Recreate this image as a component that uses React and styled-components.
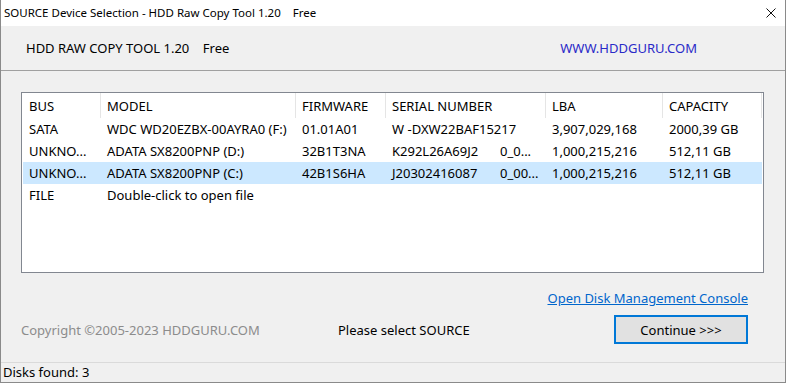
import React from "react";
import styled, { createGlobalStyle } from "styled-components";

const Global = createGlobalStyle`
  html, body { margin: 0; padding: 0; background: #f0f0f0; }
  body { font-family: "Noto Sans", "Open Sans", sans-serif; font-size: 13px; color: #000; }
  * { box-sizing: border-box; }
`;

const Window = styled.div`
  width: 786px;
  height: 383px;
  display: flex;
  flex-direction: column;
  background: #f0f0f0;
  border: 1px solid #8a8a8a;
  border-top: none;
  overflow: hidden;
`;

const TitleBar = styled.div`
  height: 26px;
  flex: none;
  background: #fff;
  display: flex;
  align-items: center;
  justify-content: space-between;
  padding: 0 9px 1px 3px;
`;

const TitleText = styled.span`
  white-space: pre;
  font-size: 11.5px;
`;

const CloseIcon = styled.svg`
  width: 10px;
  height: 10px;
  display: block;
`;

const Header = styled.div`
  height: 45px;
  flex: none;
  display: flex;
  align-items: center;
  justify-content: space-between;
  padding: 0 88px 0 25px;
  border-bottom: 1px solid #a0a0a0;
`;

const HeaderTitle = styled.span`
  white-space: pre;
`;

const SiteLink = styled.span`
  color: #2a2ac8;
`;

const Body = styled.div`
  flex: 1;
  display: flex;
  flex-direction: column;
  padding: 21px 21px 0 20px;
`;

const ListBox = styled.div`
  height: 181px;
  background: #fff;
  border: 1px solid #828790;
  padding: 0 1px 0 0;
  display: flex;
  flex-direction: column;
`;

const Row = styled.div`
  display: grid;
  grid-template-columns: 78px 195px 90px 160px 117px 99px;
  height: ${(p) => (p.$head ? "25px" : "22px")};
  align-items: stretch;
  margin-left: 1px;
  background: ${(p) => (p.$selected ? "#cce8ff" : "transparent")};
`;

const Cell = styled.div`
  display: flex;
  align-items: center;
  padding-left: 6px;
  padding-top: ${(p) => (p.$head ? "1px" : "0")};
  white-space: pre;
  overflow: hidden;
  border-right: ${(p) => (p.$head ? "1px solid #e5e5e5" : "none")};
`;

const SerialMain = styled.span`
  display: inline-block;
  width: 108px;
  white-space: pre;
`;

const Footer = styled.div`
  display: flex;
  flex-direction: column;
  padding: 17px 16px 0 0;
`;

const LinkRow = styled.div`
  display: flex;
  justify-content: flex-end;
  height: 16px;
  align-items: center;
`;

const ConsoleLink = styled.a`
  color: #0066cc;
  text-decoration: underline;
  cursor: pointer;
`;

const ActionRow = styled.div`
  display: grid;
  grid-template-columns: 317px 1fr 134px;
  align-items: center;
  margin-top: 9px;
`;

const Copyright = styled.span`
  color: #8c8c8c;
`;

const Message = styled.span``;

const Button = styled.button`
  height: 29px;
  width: 134px;
  background: #e1e1e1;
  border: 2px solid #0078d7;
  font: inherit;
  color: #000;
  padding: 0;
`;

const StatusBar = styled.div`
  height: 20px;
  flex: none;
  border-top: 1px solid #dadada;
  display: flex;
  align-items: center;
  padding-left: 2px;
  padding-bottom: 1px;
`;

const headers = ["BUS", "MODEL", "FIRMWARE", "SERIAL NUMBER", "LBA", "CAPACITY"];

const rows = [
  { bus: "SATA", model: "WDC WD20EZBX-00AYRA0 (F:)", fw: "01.01A01", serial: "W -DXW22BAF15217", extra: "", lba: "3,907,029,168", cap: "2000,39 GB" },
  { bus: "UNKNO...", model: "ADATA SX8200PNP (D:)", fw: "32B1T3NA", serial: "K292L26A69J2", extra: "0_0...", lba: "1,000,215,216", cap: "512,11 GB" },
  { bus: "UNKNO...", model: "ADATA SX8200PNP (C:)", fw: "42B1S6HA", serial: "J20302416087", extra: "0_00...", lba: "1,000,215,216", cap: "512,11 GB", selected: true },
  { bus: "FILE", model: "Double-click to open file", fw: "", serial: "", extra: "", lba: "", cap: "" },
];

export default function App() {
  return (
    <>
      <Global />
      <Window>
        <TitleBar>
          <TitleText>SOURCE Device Selection - HDD Raw Copy Tool 1.20    Free</TitleText>
          <CloseIcon viewBox="0 0 10 10">
            <path d="M0.5 0.5 L9.5 9.5 M9.5 0.5 L0.5 9.5" stroke="#111" strokeWidth="1" fill="none" />
          </CloseIcon>
        </TitleBar>
        <Header>
          <HeaderTitle>HDD RAW COPY TOOL 1.20    Free</HeaderTitle>
          <SiteLink>WWW.HDDGURU.COM</SiteLink>
        </Header>
        <Body>
          <ListBox>
            <Row $head>
              {headers.map((h) => (
                <Cell $head key={h}>{h}</Cell>
              ))}
            </Row>
            {rows.map((r, i) => (
              <Row key={i} $selected={r.selected}>
                <Cell>{r.bus}</Cell>
                <Cell>{r.model}</Cell>
                <Cell>{r.fw}</Cell>
                <Cell>
                  {r.extra ? (
                    <>
                      <SerialMain>{r.serial}</SerialMain>
                      {r.extra}
                    </>
                  ) : (
                    r.serial
                  )}
                </Cell>
                <Cell>{r.lba}</Cell>
                <Cell>{r.cap}</Cell>
              </Row>
            ))}
          </ListBox>
          <Footer>
            <LinkRow>
              <ConsoleLink>Open Disk Management Console</ConsoleLink>
            </LinkRow>
            <ActionRow>
              <Copyright>Copyright ©2005-2023 HDDGURU.COM</Copyright>
              <Message>Please select SOURCE</Message>
              <Button>Continue &gt;&gt;&gt;</Button>
            </ActionRow>
          </Footer>
        </Body>
        <StatusBar>Disks found: 3</StatusBar>
      </Window>
    </>
  );
}
